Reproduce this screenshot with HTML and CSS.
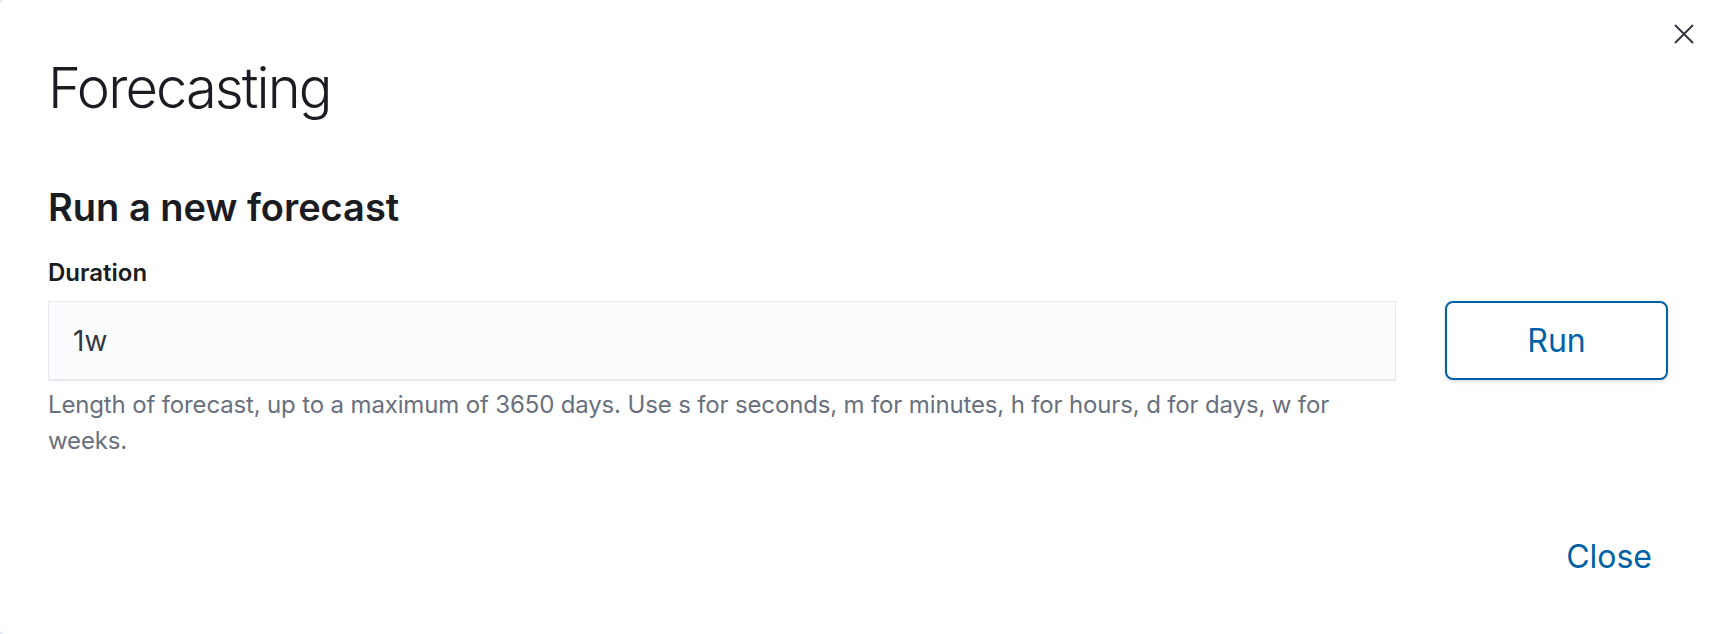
FILE: index.html
```html
<!DOCTYPE html>
<html lang="en">
<head>
<meta charset="utf-8">
<title>Forecasting</title>
<link rel="stylesheet" href="styles.css">
</head>
<body>
<div class="modal">
  <button class="modal-close" aria-label="Close this dialog">
    <svg width="20" height="20" viewBox="0 0 20 20"><path d="M1 1 L19 19 M19 1 L1 19" stroke="#343741" stroke-width="2" fill="none"/></svg>
  </button>
  <div class="modal-header">
    <h1 class="modal-title">Forecasting</h1>
  </div>
  <div class="modal-body">
    <h2 class="section-title">Run a new forecast</h2>
    <div class="form-row">
      <div class="field">
        <label class="field-label" for="duration">Duration</label>
        <input class="field-input" id="duration" type="text" value="1w">
        <div class="field-help">Length of forecast, up to a maximum of 3650 days. Use s for seconds, m for minutes, h for hours, d for days, w for weeks.</div>
      </div>
      <div class="run-col">
        <button class="btn-run">Run</button>
      </div>
    </div>
  </div>
  <div class="modal-footer">
    <button class="btn-empty">Close</button>
  </div>
</div>
</body>
</html>
```
FILE: styles.css
```css
html, body {
  margin: 0;
  padding: 0;
  background: #e4e8ef;
}
body {
  font-family: Inter, "Noto Sans", sans-serif;
  color: #343741;
}
.modal {
  position: relative;
  box-sizing: border-box;
  width: 1712px;
  height: 634px;
  background: #ffffff;
  border-radius: 5px 0 0 5px;
  display: flex;
  flex-direction: column;
}
.modal-close {
  position: absolute;
  top: 22px;
  right: 16px;
  width: 24px;
  height: 24px;
  padding: 2px;
  border: 0;
  background: transparent;
  display: flex;
  align-items: center;
  justify-content: center;
}
.modal-header {
  padding: 54px 44px 0 48px;
}
.modal-title {
  margin: 0;
  font-size: 56px;
  line-height: 68px;
  font-weight: 300;
  color: #1a1c21;
  letter-spacing: -1.9px;
}
.modal-body {
  padding: 61px 44px 0 48px;
  flex: 1;
}
.section-title {
  margin: 0;
  font-size: 38px;
  line-height: 48px;
  font-weight: 600;
  color: #1a1c21;
}
.form-row {
  margin-top: 26px;
  display: flex;
  gap: 49px;
}
.field {
  flex: 1;
  display: flex;
  flex-direction: column;
}
.field-label {
  font-size: 24px;
  line-height: 32px;
  font-weight: 600;
  color: #1a1c21;
  margin-bottom: 12px;
}
.field-input {
  box-sizing: border-box;
  height: 79px;
  width: 100%;
  margin: 0;
  padding: 0 24px;
  font-family: Inter, "Noto Sans", sans-serif;
  font-size: 28px;
  color: #343741;
  background: #fbfcfd;
  border: 1px solid #e3e7ee;
  border-radius: 0;
  box-shadow: 0 2px 2px -1px rgba(152, 162, 179, 0.3);
  outline: none;
}
.field-help {
  margin-top: 7px;
  font-size: 24px;
  line-height: 36px;
  letter-spacing: -0.15px;
  color: #69707d;
}
.run-col {
  padding-top: 44px;
}
.btn-run {
  box-sizing: border-box;
  width: 223px;
  height: 79px;
  border: 2px solid #0061a6;
  border-radius: 8px;
  background: #ffffff;
  color: #0061a6;
  font-family: Inter, "Noto Sans", sans-serif;
  font-size: 32px;
  font-weight: 400;
  box-shadow: 0 2px 4px rgba(152, 162, 179, 0.3);
}
.modal-footer {
  display: flex;
  justify-content: flex-end;
  padding: 0 44px 38px 48px;
}
.btn-empty {
  height: 80px;
  padding: 0 16px;
  border: 0;
  background: transparent;
  color: #0061a6;
  font-family: Inter, "Noto Sans", sans-serif;
  font-size: 32px;
  font-weight: 400;
}
```
